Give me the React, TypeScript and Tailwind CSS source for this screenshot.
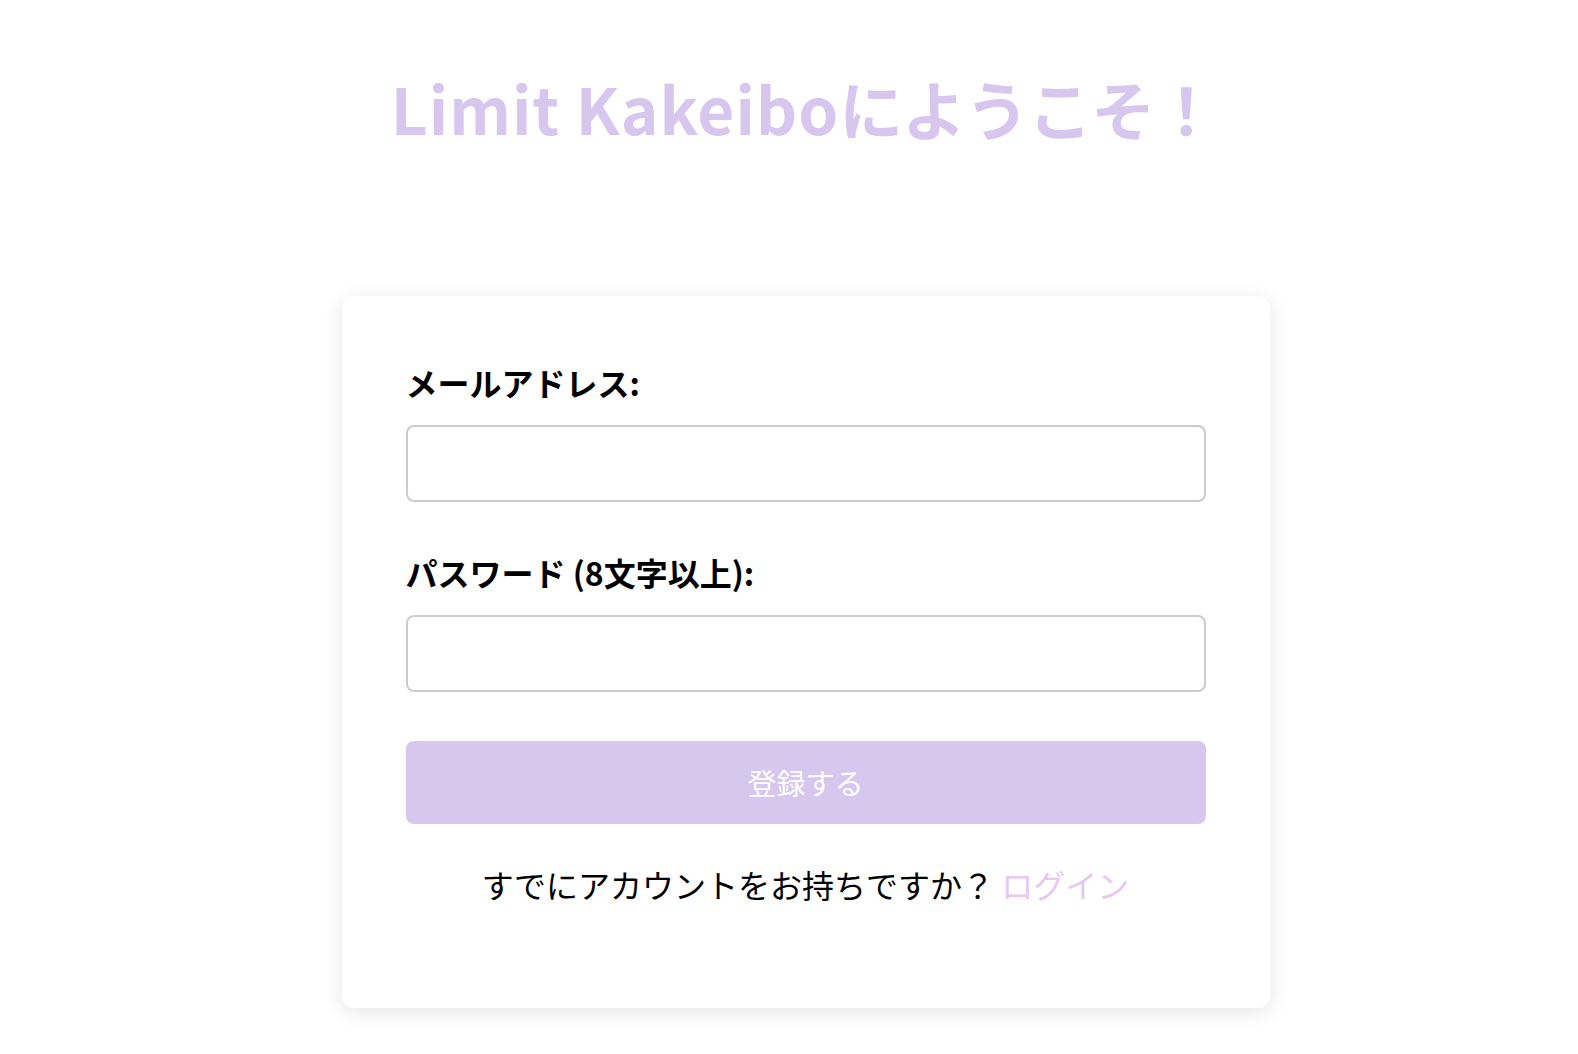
import React from "react";

const jp = "font-['Noto_Sans_CJK_JP','Noto_Sans',sans-serif]";

export default function App() {
  return (
    <div className={`min-h-screen bg-white ${jp} flex flex-col items-center`}>
      <h1 className="ml-[30px] mt-[75px] text-[64px] leading-[64px] font-bold text-[#d7c6ed]">
        <span className="tracking-[1px]">Limit Kakeibo</span>
        <span className="tracking-[-1px]">にようこそ！</span>
      </h1>

      <div className="ml-[33px] mt-[157px] w-[928px] rounded-xl bg-white px-16 pt-16 pb-[102px] shadow-[0_4px_20px_rgba(0,0,0,0.1)]">
        <form className="flex flex-col">
          <label htmlFor="email" className="text-[32px] leading-[44px] font-bold text-black">
            メールアドレス:
          </label>
          <input
            id="email"
            type="email"
            className="mt-[21px] h-[77px] w-full rounded-lg border-2 border-[#cccccc] px-4 text-[28px] outline-none"
          />

          <label htmlFor="password" className="mt-[48px] text-[32px] leading-[44px] font-bold text-black">
            パスワード (8文字以上):
          </label>
          <input
            id="password"
            type="password"
            className="mt-[21px] h-[77px] w-full rounded-lg border-2 border-[#cccccc] px-4 text-[28px] outline-none"
          />

          <button
            type="submit"
            className="mt-[49px] h-[83px] w-full rounded-lg bg-[#d7c6ee] text-[29px] text-white"
          >
            登録する
          </button>

          <p className="mt-[38px] text-center text-[32px] leading-[44px] text-black">
            すでにアカウントをお持ちですか？ <a href="#" className="text-[#e6c8f1]">ログイン</a>
          </p>
        </form>
      </div>
    </div>
  );
}
